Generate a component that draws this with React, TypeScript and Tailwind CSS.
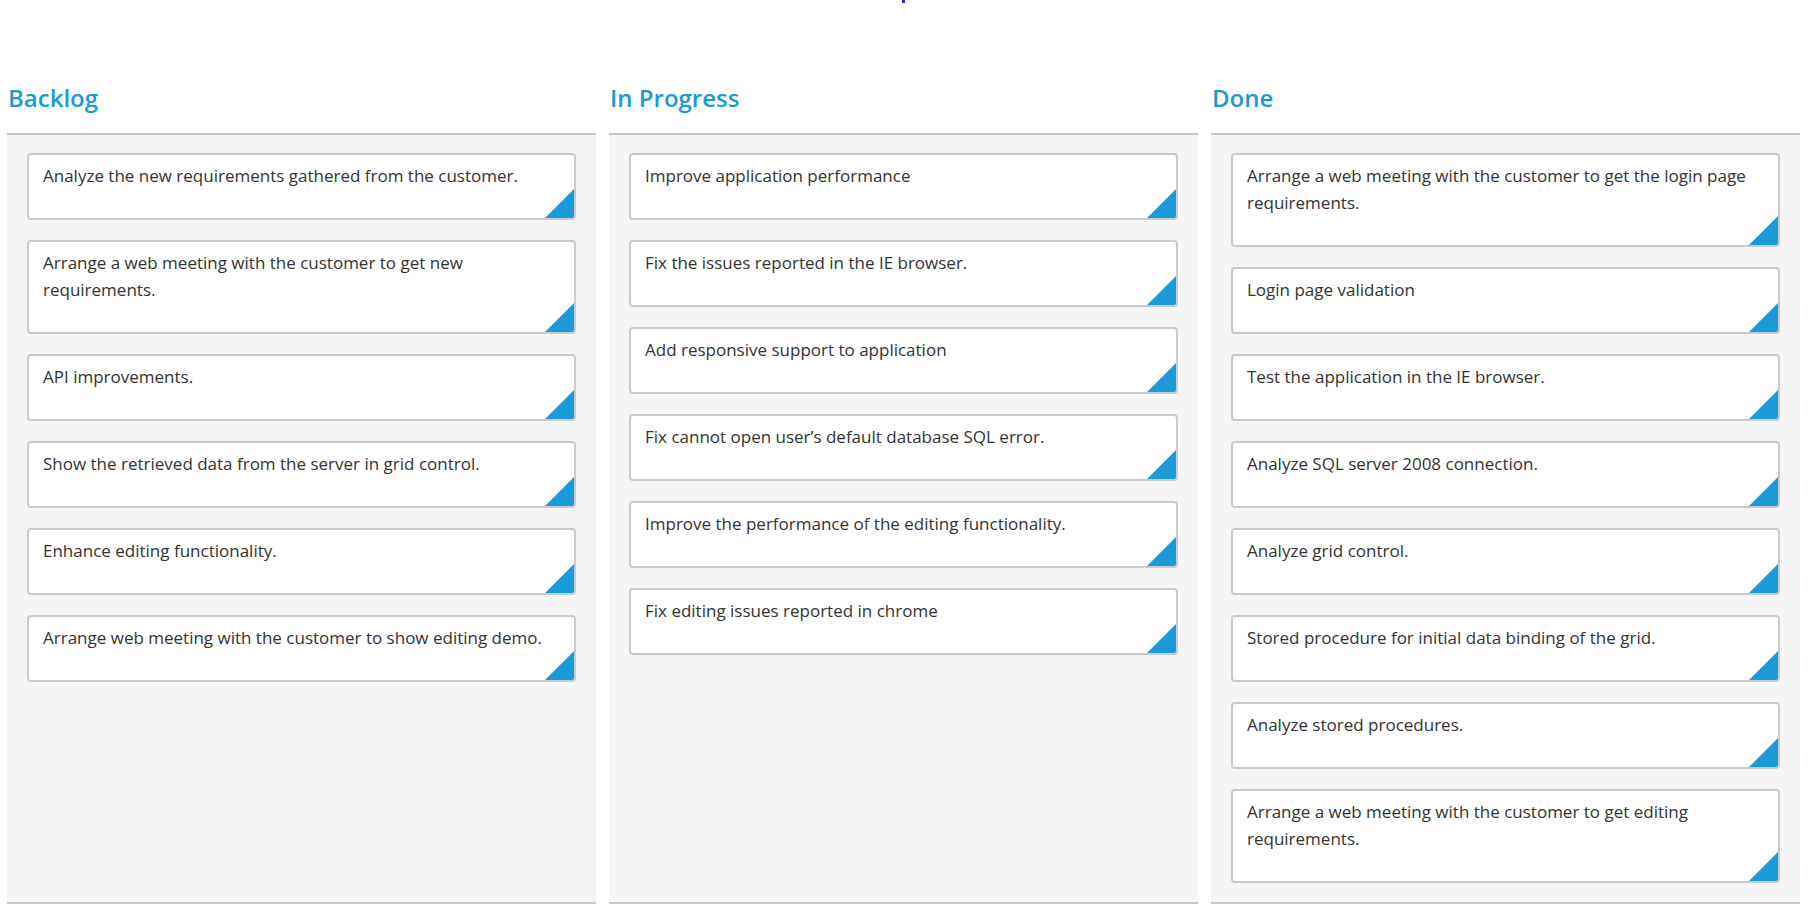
import React from "react";

type Column = {
  title: string;
  cards: string[];
};

const COLUMNS: Column[] = [
  {
    title: "Backlog",
    cards: [
      "Analyze the new requirements gathered from the customer.",
      "Arrange a web meeting with the customer to get new requirements.",
      "API improvements.",
      "Show the retrieved data from the server in grid control.",
      "Enhance editing functionality.",
      "Arrange web meeting with the customer to show editing demo.",
    ],
  },
  {
    title: "In Progress",
    cards: [
      "Improve application performance",
      "Fix the issues reported in the IE browser.",
      "Add responsive support to application",
      "Fix cannot open user’s default database SQL error.",
      "Improve the performance of the editing functionality.",
      "Fix editing issues reported in chrome",
    ],
  },
  {
    title: "Done",
    cards: [
      "Arrange a web meeting with the customer to get the login page requirements.",
      "Login page validation",
      "Test the application in the IE browser.",
      "Analyze SQL server 2008 connection.",
      "Analyze grid control.",
      "Stored procedure for initial data binding of the grid.",
      "Analyze stored procedures.",
      "Arrange a web meeting with the customer to get editing requirements.",
    ],
  },
];

function Card({ text }: { text: string }) {
  return (
    <div className="relative overflow-hidden rounded-[4px] border-2 border-[#cacaca] bg-white pl-[14px] pr-[13px] pt-[7px] pb-[29px]">
      <p className="text-[17px] leading-[27px] text-[#333]">{text}</p>
      {/* corner marker */}
      <span className="absolute bottom-0 right-0 h-[29px] w-[29px] bg-[#1a9ad6] [clip-path:polygon(100%_0,100%_100%,0_100%)]" />
    </div>
  );
}

export default function App() {
  return (
    <div className="min-h-screen bg-white pl-[7px] pr-[15px] font-['Open_Sans',sans-serif]">
      <div className="flex justify-center">
        <span className="h-[3px] w-[3px] bg-[#2b2bd9]" />
      </div>
      <div className="grid grid-cols-3 gap-[13px] pt-[79px]">
        {COLUMNS.map((col) => (
          <div key={col.title} className="flex flex-col">
            <h2 className="mb-[19px] pl-[1px] text-[24px] font-semibold leading-[32px] text-[#1a9ad6]">
              {col.title}
            </h2>
            <div className="flex flex-1 flex-col gap-[20px] border-y-2 border-[#c8c8c8] bg-[#f5f5f5] px-[20px] pt-[18px] pb-[19px]">
              {col.cards.map((c) => (
                <Card key={c} text={c} />
              ))}
            </div>
          </div>
        ))}
      </div>
    </div>
  );
}
